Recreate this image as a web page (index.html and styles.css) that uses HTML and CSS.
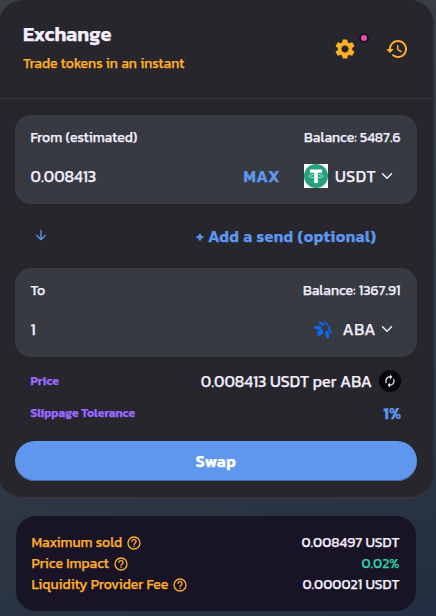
FILE: index.html
```html
<!DOCTYPE html>
<html lang="en">
<head>
    <meta charset="UTF-8">
    <meta name="viewport" content="width=device-width, initial-scale=1.0">
    <title>Exchange</title>
    <link rel="stylesheet" href="styles.css">
</head>
<body>
    <main class="card">
        <header class="card-header">
            <div>
                <h2 class="title">Exchange</h2>
                <p class="subtitle">Trade tokens in an instant</p>
            </div>
            <div class="header-actions">
                <button class="icon-btn">
                    <svg width="24" height="24" viewBox="0 0 24 24" fill="currentColor"><path d="M19.140 12.940c.04-.3.06-.61.06-.94 0-.32-.02-.64-.07-.94l2.030-1.580c.18-.14.23-.41.12-.61l-1.920-3.320c-.12-.22-.37-.29-.59-.22l-2.390.96c-.5-.38-1.030-.7-1.620-.94l-.36-2.540c-.04-.24-.24-.41-.48-.41h-3.840c-.24 0-.43.17-.47.41l-.36 2.540c-.59.24-1.130.57-1.620.94l-2.390-.96c-.22-.08-.47 0-.59.22L2.740 8.870c-.12.21-.08.47.12.61l2.030 1.580c-.05.3-.09.63-.09.94s.02.64.07.94l-2.030 1.580c-.18.14-.23.41-.12.61l1.920 3.320c.12.22.37.29.59.22l2.390-.96c.5.38 1.030.7 1.620.94l.36 2.540c.05.24.24.41.48.41h3.840c.24 0 .44-.17.47-.41l.36-2.540c.59-.24 1.130-.56 1.620-.94l2.390.96c.22.08.47 0 .59-.22l1.920-3.320c.12-.22.07-.47-.12-.61l-2.010-1.580zM12 15.600c-1.980 0-3.600-1.620-3.600-3.600s1.620-3.600 3.600-3.600 3.600 1.620 3.600 3.600-1.620 3.600-3.600 3.600z"/></svg>
                    <span class="dot"></span>
                </button>
                <button class="icon-btn">
                    <svg width="24" height="24" viewBox="0 0 24 24" fill="currentColor"><path d="M13.260 3C8.170 2.860 4 6.950 4 12H2.210c-.45 0-.67.54-.35.85l2.790 2.800c.2.200.51.200.71 0l2.790-2.800c.31-.31.09-.85-.36-.85H6c0-3.900 3.180-7.050 7.100-7 3.720.05 6.850 3.180 6.900 6.900.05 3.910-3.100 7.100-7 7.100-1.610 0-3.100-.55-4.280-1.480-.4-.31-.96-.28-1.320.08-.42.42-.39 1.130.08 1.490A8.860 8.860 0 0 0 13 21c5.050 0 9.140-4.170 9-9.260-.13-4.690-4.050-8.610-8.740-8.740zM12.750 8c-.41 0-.75.34-.75.75v3.680c0 .35.19.68.49.86l3.120 1.850c.36.21.82.09 1.030-.26.21-.36.09-.82-.26-1.030l-2.880-1.710v-3.400c0-.4-.34-.74-.75-.74z"/></svg>
                </button>
            </div>
        </header>

        <section class="card-body">
            <div class="panel">
                <div class="row label">
                    <span>From (estimated)</span>
                    <span>Balance: 5487.6</span>
                </div>
                <div class="row amount">
                    <span class="value">0.008413</span>
                    <button class="max">MAX</button>
                    <button class="token">
                        <svg width="24" height="24" viewBox="0 0 24 24"><rect width="24" height="24" fill="#fff"/><circle cx="12" cy="12" r="12" fill="#26a17b"/><path d="M6 5.500h12v3.300h-4.200V19h-3.600V8.800H6z" fill="#fff"/><ellipse cx="12" cy="12.100" rx="7.200" ry="1.700" fill="none" stroke="#c4e7db" stroke-width=".8"/></svg>
                        <span class="symbol">USDT</span>
                        <svg width="18" height="18" viewBox="0 0 24 24" fill="currentColor"><path d="M5.300 8.290a1 1 0 0 1 1.410 0L12 13.590l5.290-5.300a1 1 0 1 1 1.410 1.410L12 16.410 5.300 9.700a1 1 0 0 1 0-1.410z"/></svg>
                    </button>
                </div>
            </div>

            <div class="between">
                <svg width="16" height="16" viewBox="0 0 24 24" fill="none" stroke="currentColor" stroke-width="2"><path d="M12 4v15M5 12l7 7 7-7"/></svg>
                <button class="add-send">+ Add a send (optional)</button>
            </div>

            <div class="panel">
                <div class="row label">
                    <span>To</span>
                    <span>Balance: 1367.91</span>
                </div>
                <div class="row amount">
                    <span class="value">1</span>
                    <button class="token">
                        <svg width="24" height="24" viewBox="0 0 24 24" fill="#0a6cff"><ellipse cx="9.200" cy="15.600" rx="2.400" ry="3.500" transform="rotate(38 9.200 15.600)"/><ellipse cx="16.300" cy="17.500" rx="1.700" ry="3.800" transform="rotate(-8 16.300 17.500)"/><ellipse cx="7" cy="10.800" rx="3.800" ry="1.700" transform="rotate(8 7 10.800)"/><ellipse cx="10.300" cy="6.600" rx="3.200" ry="1.200" transform="rotate(42 10.300 6.600)"/><ellipse cx="19" cy="13.800" rx="1.100" ry="3" transform="rotate(-38 19 13.800)"/><ellipse cx="13.800" cy="6.300" rx=".8" ry="2" transform="rotate(-12 13.800 6.300)"/><ellipse cx="16.200" cy="7.300" rx=".7" ry="1.600" transform="rotate(18 16.200 7.300)"/><ellipse cx="18" cy="8.900" rx=".6" ry="1.500" transform="rotate(45 18 8.900)"/><ellipse cx="19" cy="10.900" rx="1.500" ry=".6"/></svg>
                        <span class="symbol aba">ABA</span>
                        <svg width="18" height="18" viewBox="0 0 24 24" fill="currentColor"><path d="M5.300 8.290a1 1 0 0 1 1.410 0L12 13.590l5.290-5.300a1 1 0 1 1 1.410 1.410L12 16.410 5.300 9.700a1 1 0 0 1 0-1.410z"/></svg>
                    </button>
                </div>
            </div>

            <div class="info">
                <div class="row price-row">
                    <span class="info-label">Price</span>
                    <span class="rate">0.008413 USDT per ABA</span>
                    <button class="refresh">
                        <svg width="14" height="14" viewBox="0 0 24 24" fill="currentColor"><path d="M12 6v3l4-4-4-4v3c-4.420 0-8 3.580-8 8 0 1.570.46 3.030 1.240 4.260L6.700 14.800A5.870 5.870 0 0 1 6 12c0-3.310 2.690-6 6-6zm6.760 1.740L17.300 9.200c.44.84.7 1.790.7 2.800 0 3.310-2.690 6-6 6v-3l-4 4 4 4v-3c4.420 0 8-3.580 8-8 0-1.570-.46-3.030-1.240-4.260z"/></svg>
                    </button>
                </div>
                <div class="row slip-row">
                    <span class="info-label">Slippage Tolerance</span>
                    <span class="slippage">1%</span>
                </div>
            </div>

            <button class="swap">Swap</button>
        </section>
    </main>

    <section class="details">
        <div class="row">
            <span class="detail-label">Maximum sold <svg width="16" height="16" viewBox="0 0 24 24" fill="currentColor"><path d="M11 18h2v-2h-2v2zm1-16a10 10 0 1 0 0 20 10 10 0 0 0 0-20zm0 18a8 8 0 1 1 0-16 8 8 0 0 1 0 16zm0-14a4 4 0 0 0-4 4h2a2 2 0 1 1 4 0c0 2-3 1.750-3 5h2c0-2.250 3-2.500 3-5a4 4 0 0 0-4-4z"/></svg></span>
            <span>0.008497 USDT</span>
        </div>
        <div class="row">
            <span class="detail-label">Price Impact <svg width="16" height="16" viewBox="0 0 24 24" fill="currentColor"><path d="M11 18h2v-2h-2v2zm1-16a10 10 0 1 0 0 20 10 10 0 0 0 0-20zm0 18a8 8 0 1 1 0-16 8 8 0 0 1 0 16zm0-14a4 4 0 0 0-4 4h2a2 2 0 1 1 4 0c0 2-3 1.750-3 5h2c0-2.250 3-2.500 3-5a4 4 0 0 0-4-4z"/></svg></span>
            <span class="good">0.02%</span>
        </div>
        <div class="row">
            <span class="detail-label">Liquidity Provider Fee <svg width="16" height="16" viewBox="0 0 24 24" fill="currentColor"><path d="M11 18h2v-2h-2v2zm1-16a10 10 0 1 0 0 20 10 10 0 0 0 0-20zm0 18a8 8 0 1 1 0-16 8 8 0 0 1 0 16zm0-14a4 4 0 0 0-4 4h2a2 2 0 1 1 4 0c0 2-3 1.750-3 5h2c0-2.250 3-2.500 3-5a4 4 0 0 0-4-4z"/></svg></span>
            <span>0.000021 USDT</span>
        </div>
    </section>
</body>
</html>
```
FILE: styles.css
```css
* {
    box-sizing: border-box;
}
body {
    margin: 0;
    height: 616px;
    overflow: hidden;
    font-family: Kanit, Roboto, sans-serif;
    font-size: 14px;
    color: #f4eeff;
    -webkit-text-stroke: 0.25px currentColor;
    background: linear-gradient(160deg, #3b4044 0%, #303943 60%, #222e41 100%);
}
h2, p {
    margin: 0;
}
button {
    padding: 0;
    border: none;
    background: none;
    font: inherit;
    color: inherit;
    cursor: pointer;
}
svg {
    display: block;
    flex-shrink: 0;
}
.card {
    width: 435px;
    height: 499px;
    margin-left: -1px;
    border-radius: 24px;
    background-color: #27262c;
    border-right: 1px solid #312f3a;
    border-bottom: 2px solid #3b323f;
}
.card-header {
    display: flex;
    justify-content: space-between;
    height: 99px;
    padding: 22px 24px 0 24px;
    border-bottom: 1px solid #363442;
}
.title {
    font-size: 20px;
    font-weight: 600;
    line-height: 24px;
}
.subtitle {
    margin-top: 8px;
    line-height: 20px;
    color: #ffb029;
}
.header-actions {
    display: flex;
    gap: 28px;
    height: 24px;
    margin-top: 15px;
    color: #ffb029;
}
.icon-btn {
    position: relative;
    width: 24px;
    height: 24px;
}
.dot {
    position: absolute;
    top: -4px;
    right: -12px;
    width: 10px;
    height: 10px;
    border: 2px solid #191326;
    border-radius: 50%;
    background-color: #ed4b9e;
}
.card-body {
    padding: 16px 16px 0;
}
.row {
    display: flex;
    align-items: center;
    justify-content: space-between;
}
.panel {
    height: 89px;
    padding: 12px 16.5px 0 15.5px;
    border-radius: 16px;
    background-color: #373b41;
}
.label {
    height: 20px;
}
.amount {
    height: 24px;
    margin-top: 17px;
    font-size: 16px;
}
.value {
    flex: 1;
}
.max {
    margin-right: 24px;
    color: #5e97ed;
    font-weight: 600;
    letter-spacing: 0.03em;
}
.token {
    display: flex;
    align-items: center;
    margin-right: 4.5px;
}
.symbol {
    margin: 0 2px 0 7px;
    letter-spacing: 0.03em;
}
.aba {
    margin-left: 8px;
}
.between {
    display: flex;
    align-items: center;
    justify-content: space-between;
    height: 64px;
    padding: 0 40.5px 0 18px;
    color: #5e97ed;
}
.between svg {
    margin-bottom: 2px;
}
.add-send {
    font-size: 16px;
    font-weight: 600;
    letter-spacing: 0.03em;
}
.info {
    padding: 12px 16px 0 15.5px;
}
.row.price-row {
    height: 24px;
}
.info-label {
    flex: 1;
    font-size: 12px;
    font-weight: 600;
    color: #9a6aff;
}
.rate {
    font-size: 16px;
}
.refresh {
    display: flex;
    align-items: center;
    justify-content: center;
    width: 22px;
    height: 22px;
    margin-left: 7px;
    border-radius: 50%;
    background-color: #08060b;
}
.slip-row {
    height: 20px;
    margin-top: 10px;
}
.slippage {
    font-size: 16px;
    font-weight: 600;
    color: #5e97ed;
}
.swap {
    display: block;
    width: 100%;
    height: 40px;
    margin-top: 18px;
    border-radius: 20px;
    background-color: #5e97ed;
    box-shadow: inset 0 -1px 0 #426aaa;
    font-size: 16px;
    font-weight: 600;
    letter-spacing: 0.03em;
    color: #fff;
}
.details {
    width: 400px;
    height: 95px;
    margin: 17px 0 0 16px;
    padding: 16px 16.5px 0 15.5px;
    border-radius: 20px;
    background-color: #191326;
}
.details .row {
    height: 21px;
}
.detail-label {
    display: flex;
    align-items: center;
    gap: 4px;
    color: #ffb029;
}
.good {
    color: #31d0aa;
}
```
